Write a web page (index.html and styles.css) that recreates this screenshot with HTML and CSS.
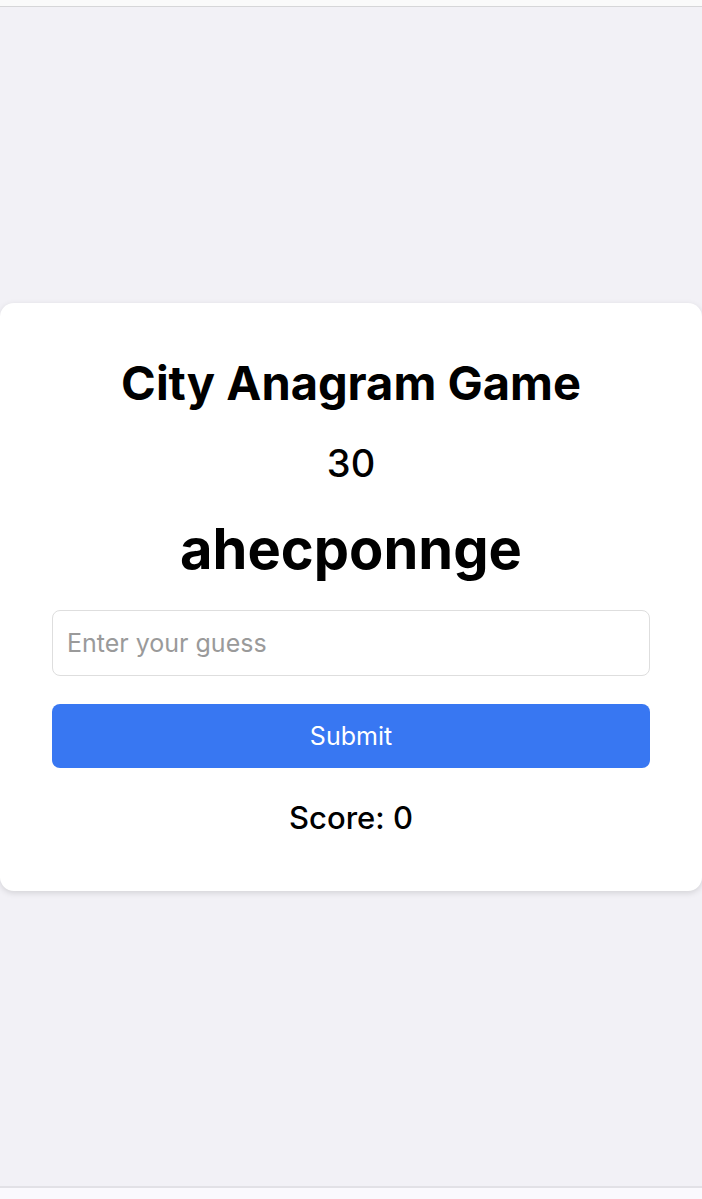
FILE: index.html
```html
<!DOCTYPE html>
<html lang="en">
<head>
<meta charset="utf-8">
<title>City Anagram Game</title>
<link rel="stylesheet" href="styles.css">
</head>
<body>
<div class="page">
  <div class="topbar"></div>
  <main class="stage">
    <section class="card">
      <h1 class="title">City Anagram Game</h1>
      <div class="timer">30</div>
      <div class="word">ahecponnge</div>
      <input class="guess" type="text" placeholder="Enter your guess">
      <button class="submit" type="button">Submit</button>
      <div class="score">Score: 0</div>
    </section>
  </main>
  <div class="bottombar"></div>
</div>
</body>
</html>
```
FILE: styles.css
```css
* { box-sizing: border-box; }

html, body {
  margin: 0;
  padding: 0;
  height: 100%;
}

body {
  font-family: Inter, "Liberation Sans", sans-serif;
  background: #f2f1f6;
  color: #000;
}

.page {
  display: flex;
  flex-direction: column;
  height: 1199px;
}

.topbar {
  height: 7px;
  background: #fafafa;
  border-bottom: 1px solid #d6d6d8;
  flex: none;
}

.stage {
  flex: 1;
  display: flex;
  align-items: center;
  justify-content: center;
}

.bottombar {
  flex: none;
  height: 13px;
  background: #faf9fd;
  border-top: 2px solid #e2e1e6;
}

.card {
  width: 100%;
  background: #fff;
  border-radius: 14px;
  box-shadow: 0 2px 6px rgba(0, 0, 0, 0.13);
  padding: 52px 52px 55px;
  display: flex;
  flex-direction: column;
  align-items: center;
}

.title {
  margin: 0;
  font-size: 47px;
  font-weight: 700;
  line-height: 56px;
}

.timer {
  margin-top: 30px;
  font-size: 38px;
  font-weight: 500;
  line-height: 44px;
}

.word {
  margin-top: 31px;
  font-size: 56px;
  font-weight: 700;
  line-height: 66px;
}

.guess {
  margin-top: 28px;
  width: 100%;
  height: 66px;
  border: 1.5px solid #dedede;
  border-radius: 8px;
  padding: 0 14px;
  font-family: inherit;
  font-size: 25px;
  color: #000;
  background: #fff;
  outline: none;
}

.guess::placeholder {
  color: #9a9a9a;
}

.submit {
  margin-top: 28px;
  width: 100%;
  height: 64px;
  border: none;
  border-radius: 8px;
  background: #3877f2;
  color: #fff;
  font-family: inherit;
  font-size: 25px;
  cursor: pointer;
}

.score {
  margin-top: 32px;
  font-size: 31px;
  font-weight: 500;
  line-height: 36px;
}
```
